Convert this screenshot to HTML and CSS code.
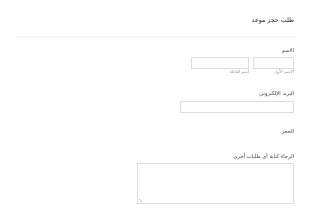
FILE: index.html
```html
<!DOCTYPE html>
<html lang="ar" dir="rtl">
<head>
    <meta charset="UTF-8">
    <meta name="viewport" content="width=device-width, initial-scale=1.0">
    <title>طلب حجز موعد</title>
    <link rel="stylesheet" href="styles.css">
</head>
<body>
    <main class="formPage">
        <h1 class="formTitle">طلب حجز موعد</h1>
        <form class="formBody">
            <div class="field nameField">
                <label class="fieldLabel">الاسم</label>
                <div class="nameRow">
                    <div class="namePart first">
                        <input type="text" class="textBox">
                        <span class="subLabel">الاسم الأول</span>
                    </div>
                    <div class="namePart last">
                        <input type="text" class="textBox">
                        <span class="subLabel">اسم العائلة</span>
                    </div>
                </div>
            </div>
            <div class="field emailField">
                <label class="fieldLabel">البريد الإلكتروني</label>
                <input type="email" class="textBox">
            </div>
            <div class="field bookField">
                <label class="fieldLabel">الحجز</label>
            </div>
            <div class="field notesField">
                <label class="fieldLabel">الرجاء كتابة أي طلبات أخرى</label>
                <div class="notesWrap">
                    <textarea class="notesBox"></textarea>
                    <span class="grip"></span>
                </div>
            </div>
        </form>
    </main>
</body>
</html>
```

FILE: styles.css
```css
/* page basics */
body {
    margin: 0;
    background-color: #fff;
    font-family: "DejaVu Sans", sans-serif;
    color: #444;
    -webkit-font-smoothing: antialiased;
}

/* own layer so the tiny text gets plain grey smoothing */
.formPage {
    padding: 15px 15px 0 15px;
    will-change: transform;
}

/* heading with the light divider under it */
.formTitle {
    margin: 0;
    padding: 0 1px 11px 0;
    font-size: 6.3px;
    line-height: 10px;
    font-weight: normal;
    color: #222;
    border-bottom: 1px solid #f0f0f0;
}

.formBody {
    display: flex;
    flex-direction: column;
    padding: 9px 1px 0 0;
}

.field {
    display: flex;
    flex-direction: column;
    align-items: flex-start;
}

.fieldLabel {
    font-size: 5.2px;
    line-height: 8px;
    color: #444;
    margin-bottom: 3px;
}

/* first / last name side by side */
.nameRow {
    display: flex;
    gap: 4px;
}

.namePart {
    display: flex;
    flex-direction: column;
    align-items: flex-start;
}

.namePart.first .textBox {
    width: 41px;
}

.namePart.last .textBox {
    width: 58px;
}

.subLabel {
    font-size: 4.2px;
    line-height: 6px;
    color: #999;
}

.textBox {
    box-sizing: border-box;
    height: 12px;
    margin: 0;
    padding: 0 2px;
    border: 1px solid #ddd;
    border-radius: 0;
    background: #fff;
}

.emailField {
    margin-top: 14px;
}

.emailField .fieldLabel {
    margin-bottom: 4px;
}

.emailField .textBox {
    width: 114px;
}

.bookField {
    margin-top: 14px;
}

.notesField {
    margin-top: 14px;
}

.notesWrap {
    position: relative;
    display: flex;
}

.notesBox {
    box-sizing: border-box;
    width: 157px;
    height: 41px;
    margin: 0;
    padding: 2px;
    border: 1px solid #ddd;
    border-radius: 0;
    font-family: inherit;
    resize: none;
}

/* tiny resize mark in the bottom-left corner */
.grip {
    position: absolute;
    left: 2px;
    bottom: 2px;
    width: 3px;
    height: 3px;
    background: linear-gradient(45deg, transparent 40%, #bbb 40%, #bbb 60%, transparent 60%);
}
```
